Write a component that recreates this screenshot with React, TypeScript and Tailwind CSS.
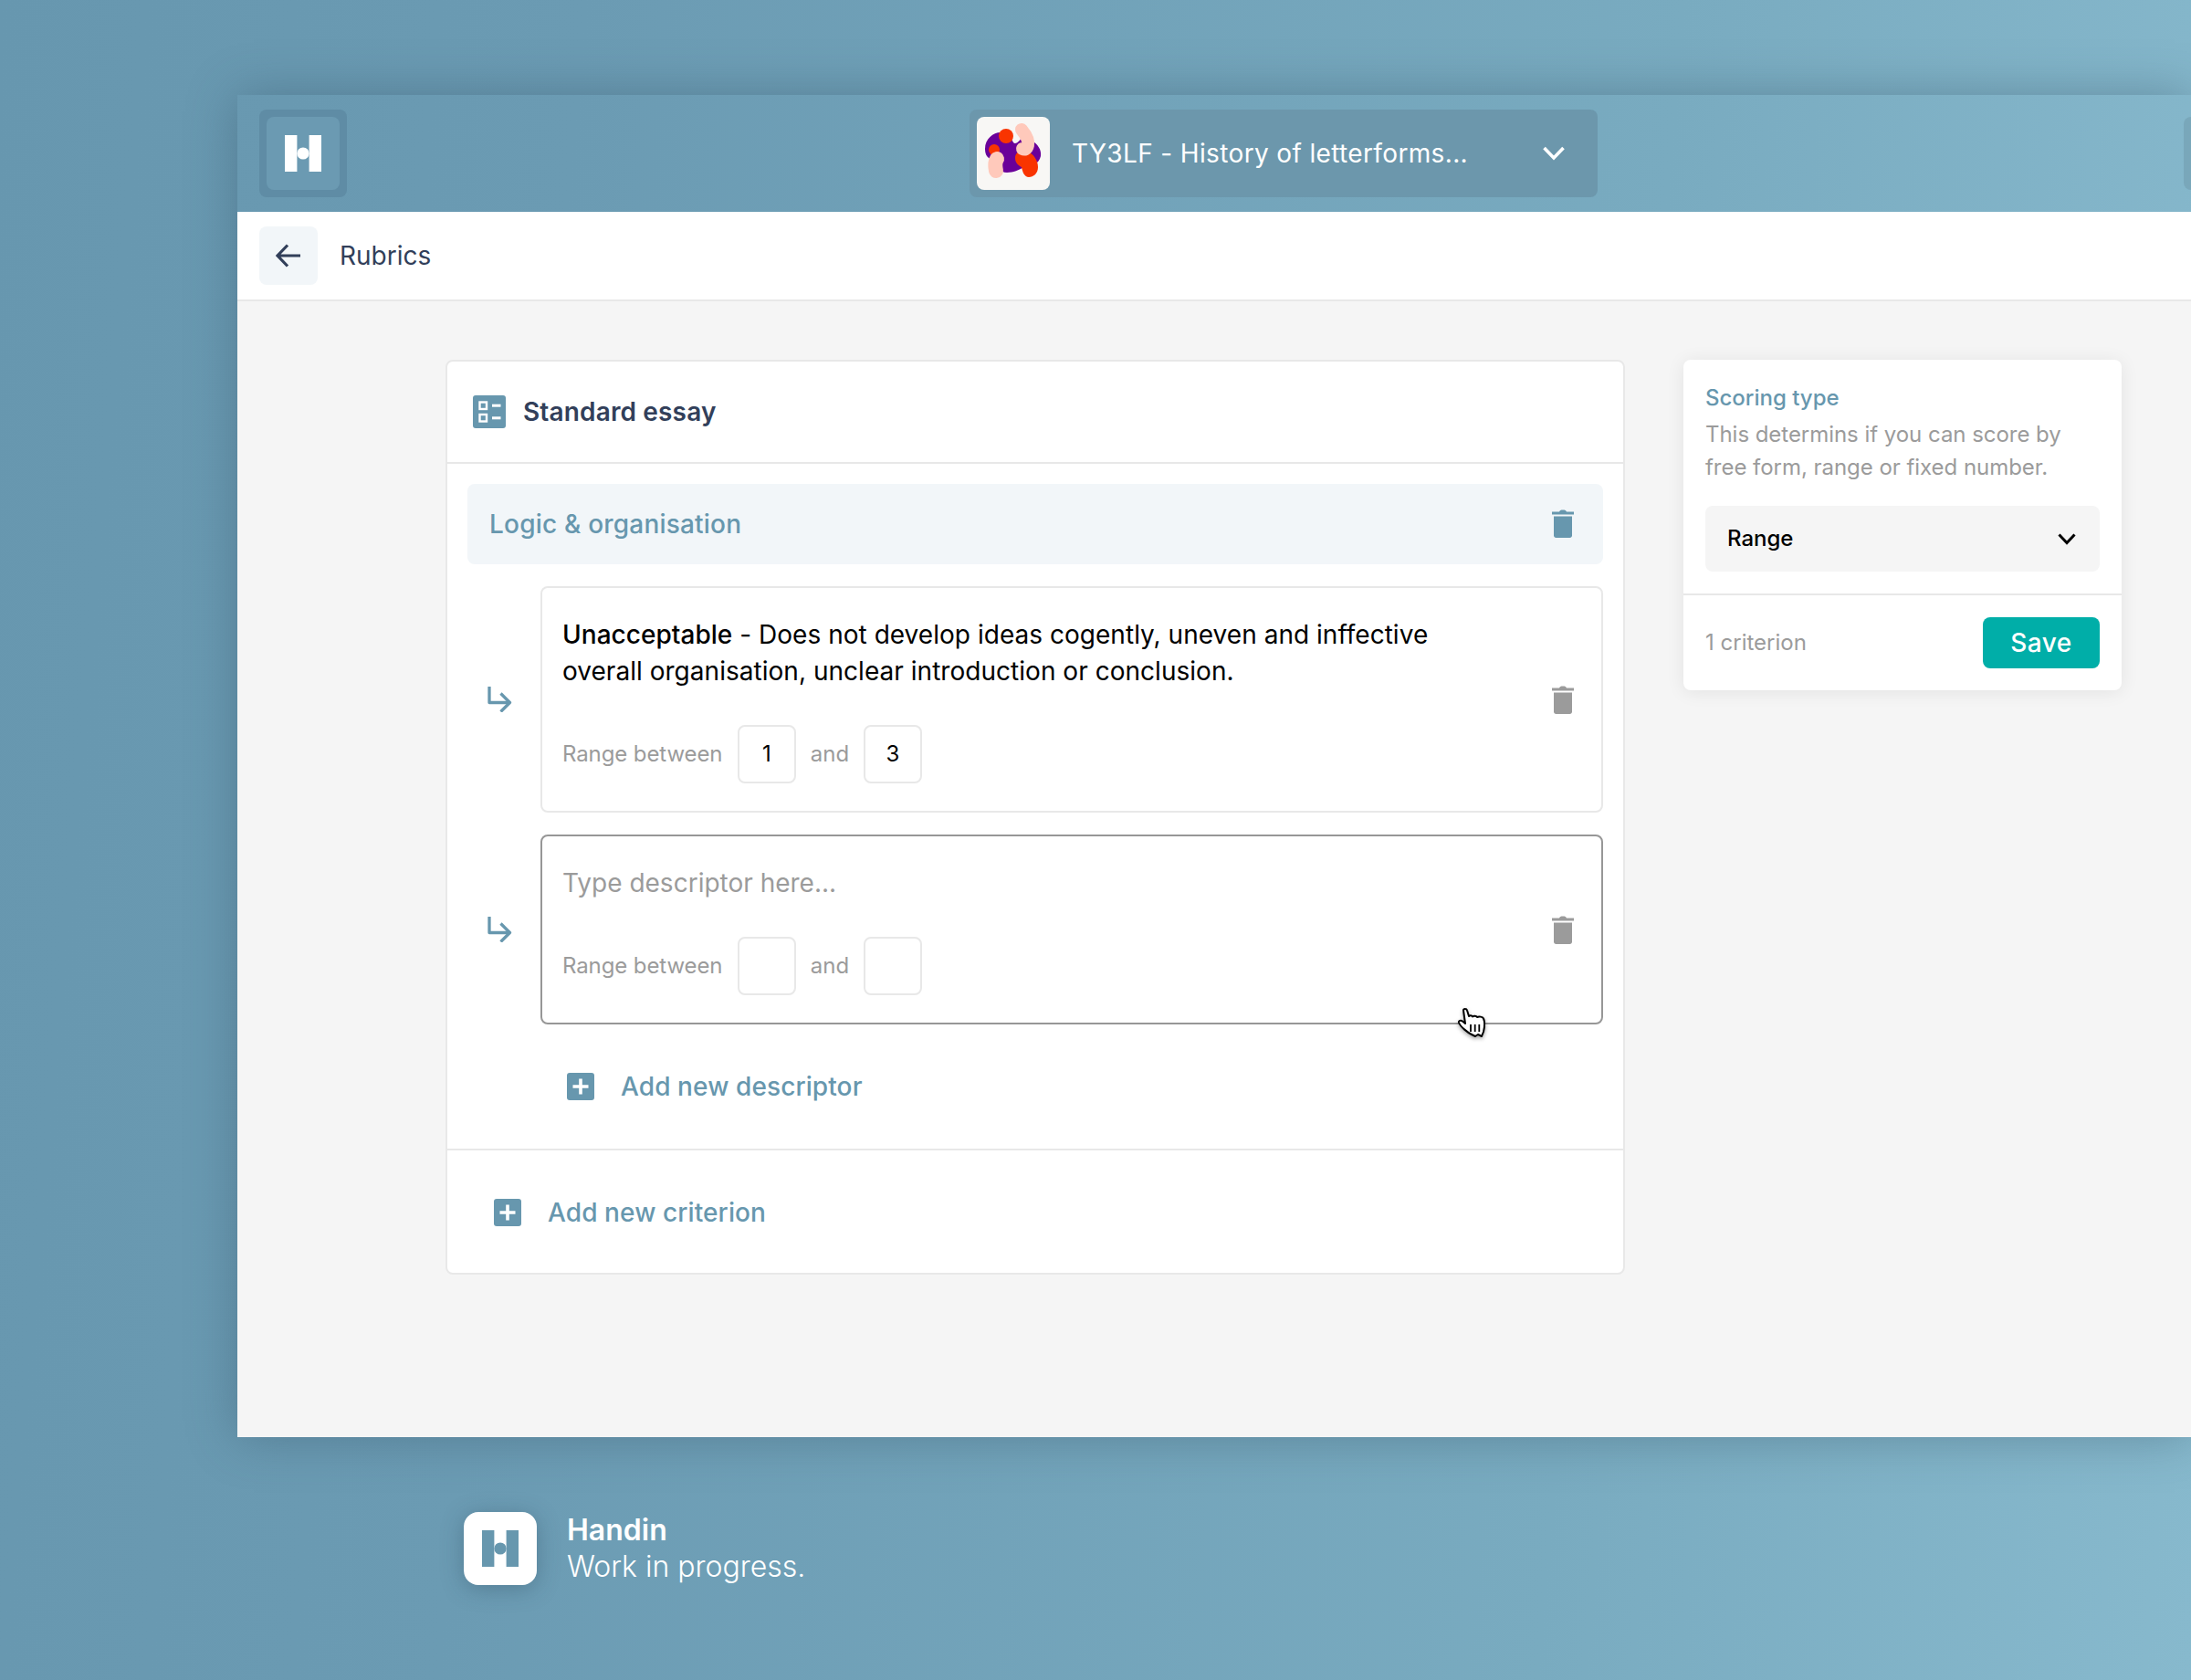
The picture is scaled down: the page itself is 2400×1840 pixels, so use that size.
const FONT = "font-['Inter','Liberation_Sans',sans-serif]";

function HandinMark({ className, color }: { className: string; color: string }) {
  return (
    <svg viewBox="0 0 40 40" className={className} fill={color}>
      <rect x="0" y="0" width="13.4" height="40" />
      <rect x="26.6" y="0" width="13.4" height="40" />
      <circle cx="20" cy="20" r="6.6" />
    </svg>
  );
}

function TrashIcon({ className }: { className: string }) {
  return (
    <svg viewBox="0 0 24 31" className={className} fill="currentColor">
      <path d="M8 2.600C8.400 1 9.500 0.400 12 0.400s3.600 0.600 4 2.200h8v3H0v-3h8z" />
      <path d="M2 7.600h20V28.500c0 1.400-1.100 2.500-2.500 2.500h-15C3.100 31 2 29.900 2 28.500V7.600z" />
    </svg>
  );
}

function SubArrow() {
  return (
    <svg viewBox="0 0 27 28" className="w-[27px] h-[28px] text-[#6797ae]" fill="none" stroke="currentColor" strokeWidth="3.300" strokeLinejoin="round">
      <path d="M2 0V17.500H24" />
      <path d="M14.500 7.500L24.500 17.500L14.500 27.500" />
    </svg>
  );
}

function PlusBox() {
  return (
    <svg viewBox="0 0 30 30" className="w-[30px] h-[30px] shrink-0">
      <rect width="30" height="30" rx="3" fill="#6797ae" />
      <path d="M15 6.500V23.500M6.500 15H23.500" stroke="#fff" strokeWidth="3.600" />
    </svg>
  );
}

function RubricIcon() {
  return (
    <svg viewBox="0 0 36 36" className="w-9 h-9 shrink-0">
      <rect width="36" height="36" rx="3" fill="#6797ae" />
      <g fill="none" stroke="#fff" strokeWidth="2.400">
        <rect x="7.500" y="7.500" width="7.500" height="7.500" />
        <rect x="7.500" y="21" width="7.500" height="7.500" />
      </g>
      <rect x="21" y="9.700" width="9.500" height="3" fill="#fff" />
      <rect x="21" y="23.300" width="9.500" height="3" fill="#fff" />
    </svg>
  );
}

function CourseArt() {
  return (
    <div className="w-20 h-20 rounded-lg bg-[#f8f7f5] shrink-0">
      <svg viewBox="0 0 80 80" className="w-20 h-20">
        <path d="M9 35C9 24 18 17 26 17C33 17 37 22 40 28C43 32 48 24 50 22L60 26C67 30 71 36 70 43C68 52 60 54 52 55C46 58 40 61 33 61C25 61 23 54 22 46C14 48 9 44 9 35Z" fill="#6a0099" />
        <circle cx="32" cy="21" r="8" fill="#f93400" />
        <circle cx="19" cy="36" r="6" fill="#f93400" />
        <path d="M42 45C42 38 50 35 56 38C62 41 67 47 67 55C67 62 62 66 57 66C52 66 50 60 49 55C45 53 42 50 42 45Z" fill="#f93400" />
        <path d="M49 14C54 20 57 26 56 31C55 36 52 36 50 35" fill="none" stroke="#ffc9bb" strokeWidth="14" strokeLinecap="round" />
        <path d="M22 46C20 49 20 54 21 59" fill="none" stroke="#ffc9bb" strokeWidth="16" strokeLinecap="round" />
      </svg>
    </div>
  );
}

function RangeBox({ value }: { value?: string }) {
  return (
    <div className="w-16 h-16 rounded-lg border-2 border-[#e8e8e8] flex items-center justify-center text-[24px] text-black">
      {value}
    </div>
  );
}

function RangeRow({ from, to }: { from?: string; to?: string }) {
  return (
    <div className="flex items-center mt-[39px] text-[24px] text-[#9b9b9b]">
      <span className="w-[192px] tracking-[-0.1px]">Range between</span>
      <RangeBox value={from} />
      <span className="w-[74px] text-center">and</span>
      <RangeBox value={to} />
    </div>
  );
}

function Descriptor({ active, children, from, to }: { active?: boolean; children: React.ReactNode; from?: string; to?: string }) {
  return (
    <div className="flex items-center">
      <div className="w-20 pl-[22px] shrink-0">
        <SubArrow />
      </div>
      <div className={`flex-1 flex items-center rounded-lg border-2 pl-[22px] pr-[30px] pt-[31px] pb-[30px] ${active ? "border-[#979797]" : "border-[#e8e8e8]"}`}>
        <div className="flex-1">
          {children}
          <RangeRow from={from} to={to} />
        </div>
        <TrashIcon className="w-6 h-[31px] -mt-px text-[#9b9b9b]" />
      </div>
    </div>
  );
}

function HandCursor() {
  return (
    <svg viewBox="0 0 30 32" className="absolute left-[1337px] top-[1000px] w-[30px] h-8 drop-shadow-[0_2px_2px_rgba(0,0,0,0.35)]">
      <path d="M6 2.500C6 0.500 9.500 0.500 10 2.500L12 9C13 8 15 8 16 9.500C17 8.500 20 8.500 21 10C23 9 27 9.500 28 11.500C29.500 15 29.500 20 28 26L26 31L22 29L19 31L15 29C11 27 3 21 1 16C0.500 14 3 13 5 14.500L8 17Z" fill="#fff" stroke="#000" strokeWidth="2" strokeLinejoin="round" />
      <path d="M14 18V26M18.700 18V26M23.300 18V26" stroke="#000" strokeWidth="1.800" />
    </svg>
  );
}

export default function App() {
  return (
    <div className={`${FONT} w-[2400px] h-[1840px] overflow-hidden flex flex-col bg-[linear-gradient(95deg,#6797af_0%,#6b9bb3_25%,#79abc0_72%,#87b9cd_100%)]`}>
      <div className="relative ml-[260px] mt-[104px] w-[2140px] h-[1470px] flex flex-col shadow-[0_0_50px_rgba(50,80,100,0.4)]">
        <header className="h-32 flex items-center pl-6 shrink-0">
          <div className="w-24 h-24 shrink-0 rounded-lg bg-[#5f8ca5] flex items-center justify-center">
            <div className="w-20 h-20 rounded-lg bg-[#6b9ab2] flex items-center justify-center">
              <HandinMark className="w-10 h-10" color="#fff" />
            </div>
          </div>
          <div className="ml-[682px] w-[688px] h-24 shrink-0 rounded-lg bg-[#6c97ac] flex items-center pl-2 pr-9">
            <CourseArt />
            <span className="ml-6 flex-1 text-[28px] text-white tracking-[0.36px]">TY3LF - History of letterforms...</span>
            <svg viewBox="0 0 24 16" className="w-6 h-4" fill="none" stroke="#fff" strokeWidth="3.600">
              <path d="M1.500 2L12 13L22.500 2" />
            </svg>
          </div>
          <div className="ml-[642px] w-20 h-20 shrink-0 rounded-lg bg-[#79a7ba]" />
        </header>

        <div className="h-[98px] shrink-0 bg-white border-b-2 border-[#e8e8e8] flex items-center pl-6">
          <div className="w-16 h-16 rounded-lg bg-[#f2f6f9] flex items-center justify-center">
            <svg viewBox="0 0 28 26" className="w-7 h-[26px]" fill="none" stroke="#323f5a" strokeWidth="3.200">
              <path d="M13 1.500L2 13L13 24.500M2 13H27" />
            </svg>
          </div>
          <span className="ml-6 text-[28px] text-[#323f5a]">Rubrics</span>
        </div>

        <main className="flex-1 bg-[#f5f5f5] flex items-start pl-[228px] pt-16">
          <section className="w-[1292px] bg-white rounded-lg border-2 border-[#e8e8e8]">
            <div className="h-[112px] border-b-2 border-[#e8e8e8] flex items-center pl-7">
              <RubricIcon />
              <h1 className="ml-[19px] text-[28px] font-semibold text-[#323f5a] tracking-[0.15px]">Standard essay</h1>
            </div>

            <div className="pt-[22px] px-[22px]">
              <div className="h-[88px] rounded-lg bg-[#f2f6f9] flex items-center justify-between pl-6 pr-8 text-[#6797ae]">
                <span className="text-[28px] font-medium tracking-[0.2px]">Logic &amp; organisation</span>
                <TrashIcon className="w-6 h-[31px] -mt-px" />
              </div>

              <div className="mt-6 flex flex-col gap-6">
                <Descriptor from="1" to="3">
                  <p className="text-[28px] leading-10 text-black max-w-[980px] tracking-[0.03px]">
                    <span className="font-medium">Unacceptable</span> - Does not develop ideas cogently, uneven and inffective overall organisation, unclear introduction or conclusion.
                  </p>
                </Descriptor>
                <Descriptor active>
                  <p className="text-[28px] leading-10 text-[#9b9b9b]">Type descriptor here...</p>
                </Descriptor>
              </div>

              <div className="h-[136px] flex items-center pl-[109px] gap-[29px] text-[#6797ae]">
                <PlusBox />
                <span className="text-[28px] font-medium tracking-[0.1px]">Add new descriptor</span>
              </div>
            </div>

            <div className="h-[136px] pt-[2px] border-t-2 border-[#e8e8e8] flex items-center pl-[51px] gap-[29px] text-[#6797ae]">
              <PlusBox />
              <span className="text-[28px] font-medium tracking-[0.1px]">Add new criterion</span>
            </div>
          </section>

          <aside className="ml-16 w-[480px] bg-white rounded-lg shadow-[0_2px_20px_rgba(0,0,0,0.08)]">
            <div className="px-6 pt-[24px] pb-6 border-b-2 border-[#e8e8e8]">
              <h2 className="text-[24px] leading-9 font-medium text-[#6797ae]">Scoring type</h2>
              <p className="mt-[4px] text-[24px] leading-9 text-[#9b9b9b] tracking-[-0.04px]">This determins if you can score by free form, range or fixed number.</p>
              <div className="mt-6 h-[72px] rounded-lg bg-[#f5f5f5] flex items-center justify-between pl-6 pr-[26px]">
                <span className="text-[24px] font-medium text-black">Range</span>
                <svg viewBox="0 0 20 13" className="w-5 h-[13px]" fill="none" stroke="#000" strokeWidth="3">
                  <path d="M1.500 1.500L10 10.500L18.500 1.500" />
                </svg>
              </div>
            </div>
            <div className="h-[104px] px-6 flex items-center justify-between">
              <span className="text-[24px] text-[#9b9b9b]">1 criterion</span>
              <button className="w-32 h-14 rounded-lg bg-[#00aea8] text-white text-[28px] font-medium tracking-[0.5px]">Save</button>
            </div>
          </aside>
        </main>

        <HandCursor />
      </div>

      <footer className="ml-[508px] mt-[82px] flex items-center gap-[33px]">
        <div className="w-20 h-20 rounded-2xl bg-white flex items-center justify-center shadow-[0_4px_24px_rgba(40,70,90,0.35)]">
          <HandinMark className="w-10 h-10" color="#6797ae" />
        </div>
        <div className="text-white text-[32px] leading-10">
          <div className="font-semibold">Handin</div>
          <div className="font-light">Work in progress.</div>
        </div>
      </footer>
    </div>
  );
}
